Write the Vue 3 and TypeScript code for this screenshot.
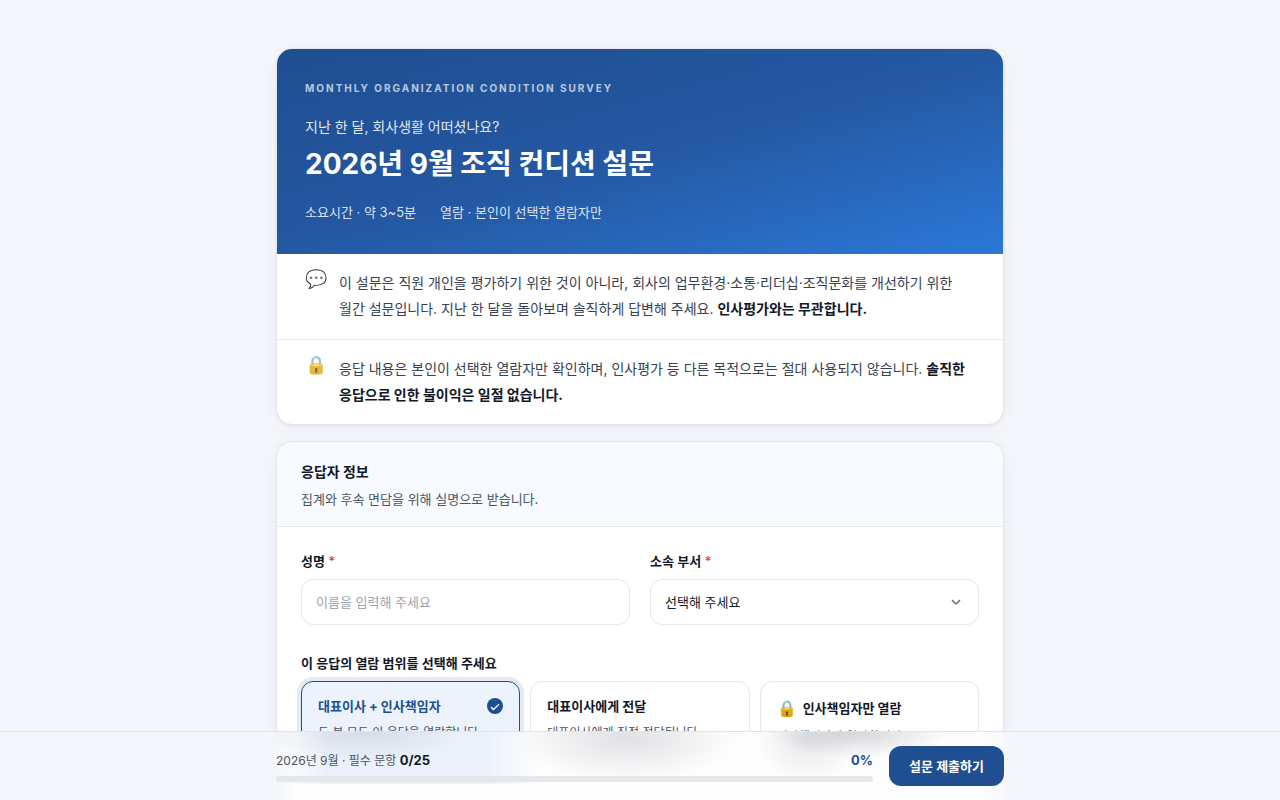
<script setup lang="ts">
import { computed, ref } from 'vue'

interface Scope {
  id: string
  icon?: string
  title: string
  text: string
}

const scopes: Scope[] = [
  { id: 'both', title: '대표이사 + 인사책임자', text: '두 분 모두 이 응답을 열람합니다.' },
  { id: 'ceo', title: '대표이사에게 전달', text: '대표이사에게 직접 전달됩니다.' },
  { id: 'hr', icon: '🔒', title: '인사책임자만 열람', text: '인사책임자만 열람합니다.' },
]

const name = ref('')
const department = ref('')
const scope = ref('both')
const answered = ref(0)
const total = 25
const percent = computed(() => Math.round((answered.value / total) * 100))
</script>

<template>
  <form class="page" @submit.prevent>
    <main class="column">
      <section class="card">
        <header class="hero">
          <p class="eyebrow">MONTHLY ORGANIZATION CONDITION SURVEY</p>
          <p class="lead">지난 한 달, 회사생활 어떠셨나요?</p>
          <h1>2026년 9월 조직 컨디션 설문</h1>
          <div class="meta"><span>소요시간 · 약 3~5분</span><span>열람 · 본인이 선택한 열람자만</span></div>
        </header>
        <div class="notice">
          <span class="notice-icon">💬</span>
          <p>이 설문은 직원 개인을 평가하기 위한 것이 아니라, 회사의 업무환경·소통·리더십·조직문화를 개선하기 위한 월간 설문입니다. 지난 한 달을 돌아보며 솔직하게 답변해 주세요. <strong>인사평가와는 무관합니다.</strong></p>
        </div>
        <div class="notice">
          <span class="notice-icon">🔒</span>
          <p>응답 내용은 본인이 선택한 열람자만 확인하며, 인사평가 등 다른 목적으로는 절대 사용되지 않습니다. <strong>솔직한 응답으로 인한 불이익은 일절 없습니다.</strong></p>
        </div>
      </section>

      <section class="card">
        <header class="section-head">
          <h2>응답자 정보</h2>
          <p>집계와 후속 면담을 위해 실명으로 받습니다.</p>
        </header>
        <div class="section-body">
          <div class="fields">
            <div class="field">
              <label for="name">성명 <span class="required">*</span></label>
              <input id="name" v-model="name" class="control" type="text" placeholder="이름을 입력해 주세요">
            </div>
            <div class="field">
              <label for="department">소속 부서 <span class="required">*</span></label>
              <div class="select-wrap">
                <select id="department" v-model="department" class="control">
                  <option value="">선택해 주세요</option>
                </select>
                <svg class="chevron" viewBox="0 0 12 12" aria-hidden="true"><path d="M2 4.2 6 8l4-3.8" /></svg>
              </div>
            </div>
          </div>
          <fieldset class="scopes">
            <legend>이 응답의 열람 범위를 선택해 주세요</legend>
            <div class="options">
              <label v-for="item in scopes" :key="item.id" class="option" :class="{ selected: scope === item.id }">
                <input v-model="scope" class="option-input" type="radio" name="scope" :value="item.id">
                <span class="option-title">
                  <span v-if="item.icon" class="option-icon">{{ item.icon }}</span>
                  <span>{{ item.title }}</span>
                  <svg v-if="scope === item.id" class="check" viewBox="0 0 16 16" aria-hidden="true"><circle cx="8" cy="8" r="8" /><path d="m3.9 9 2.6 2.5 5.6-5.4" /></svg>
                </span>
                <span class="option-text">{{ item.text }}</span>
              </label>
            </div>
          </fieldset>
        </div>
      </section>
    </main>

    <footer class="bar">
      <div class="bar-inner">
        <div class="progress">
          <div class="progress-labels">
            <span>2026년 9월 · 필수 문항 <strong>{{ answered }}/{{ total }}</strong></span>
            <strong class="percent">{{ percent }}%</strong>
          </div>
          <div class="track"><div class="fill" :style="{ width: percent + '%' }"></div></div>
        </div>
        <button class="submit" type="submit">설문 제출하기</button>
      </div>
    </footer>
  </form>
</template>

<style>
body {
  margin: 0;
  background: #f4f6fb;
}
</style>

<style scoped>
* {
  box-sizing: border-box;
}

.page {
  padding: 48px 24px 80px;
  color: #111827;
  font-family: Inter, "Noto Sans CJK KR", sans-serif;
  font-size: 13px;
  line-height: 20px;
  word-break: keep-all;
}

p,
h1,
h2 {
  margin: 0;
}

.column {
  display: flex;
  flex-direction: column;
  gap: 16px;
  max-width: 728px;
  margin: 0 auto;
}

.card {
  overflow: hidden;
  border: 1px solid #e5e7eb;
  border-radius: 16px;
  background: #fff;
  box-shadow: 0 1px 3px rgba(16, 24, 40, 0.06), 0 4px 16px rgba(16, 24, 40, 0.04);
}

.hero {
  padding: 30px 28px;
  background: linear-gradient(165deg, #1f4e91 0%, #2458a2 50%, #2b78d8 100%);
  color: #fff;
}

.eyebrow {
  margin-bottom: 18px;
  color: rgba(255, 255, 255, 0.7);
  font-size: 10px;
  font-weight: 700;
  letter-spacing: 2px;
  line-height: 18px;
}

.lead {
  color: rgba(255, 255, 255, 0.88);
  font-size: 14px;
  line-height: 24px;
}

h1 {
  margin: 5px 0 17px;
  font-size: 28px;
  font-weight: 700;
  line-height: 40px;
}

.meta {
  display: flex;
  gap: 24px;
  color: rgba(255, 255, 255, 0.85);
  line-height: 23px;
}

.notice {
  display: flex;
  gap: 12px;
  padding: 16px 28px 17px;
  color: #374151;
  font-size: 14px;
  line-height: 26px;
}

.notice + .notice {
  padding-bottom: 16px;
  border-top: 1px solid #e5e7eb;
}

.notice-icon {
  flex: none;
  width: 22px;
  font-size: 18px;
  line-height: 18px;
  text-align: center;
  opacity: 0.8;
}

.notice strong {
  color: #111827;
  font-weight: 700;
}

.section-head {
  padding: 16px 24px 15px;
  border-bottom: 1px solid #e5e7eb;
  background: #f7faff;
}

h2 {
  margin-bottom: 2px;
  font-size: 14px;
  font-weight: 700;
  line-height: 28px;
}

.section-head p {
  color: #4b5563;
  line-height: 23px;
}

.section-body {
  padding: 24px;
}

.fields {
  display: grid;
  grid-template-columns: 1fr 1fr;
  gap: 20px;
}

.field label,
legend {
  display: block;
  padding: 0;
  font-weight: 600;
}

.field label {
  margin-bottom: 8px;
}

.required {
  color: #ef4444;
}

.control {
  display: block;
  width: 100%;
  height: 46px;
  padding: 0 14px;
  border: 1px solid #e5e7eb;
  border-radius: 12px;
  outline: none;
  background: #fff;
  color: #111827;
  font: inherit;
  appearance: none;
}

.control::placeholder {
  color: #9ca3af;
}

.select-wrap {
  position: relative;
}

.chevron {
  position: absolute;
  top: 17px;
  right: 17px;
  width: 12px;
  height: 12px;
  fill: none;
  stroke: #6b7280;
  stroke-width: 1.6;
  pointer-events: none;
}

.scopes {
  min-width: 0;
  margin: 28px 0 0;
  padding: 0;
  border: 0;
}

legend {
  margin-bottom: 8px;
}

.options {
  display: grid;
  grid-template-columns: repeat(3, 1fr);
  gap: 10px;
}

.option {
  position: relative;
  display: flex;
  flex-direction: column;
  gap: 6px;
  padding: 13px 16px;
  border: 1px solid #e5e7eb;
  border-radius: 12px;
  background: #fff;
}

.option.selected {
  border-color: #1f4e91;
  background: #edf3fc;
  box-shadow: 0 0 0 4px #e4ebf5;
}

.option-input {
  position: absolute;
  opacity: 0;
}

.option-title {
  display: flex;
  align-items: center;
  font-weight: 700;
  line-height: 22px;
}

.selected .option-title {
  color: #1f4e91;
}

.option-icon {
  margin-right: 6px;
  font-size: 16px;
  line-height: 26px;
}

.check {
  width: 16px;
  height: 16px;
  margin-left: auto;
  fill: #1f4e91;
}

.check path {
  fill: none;
  stroke: #fff;
  stroke-width: 1.3;
}

.option-text {
  color: #4b5563;
  font-size: 12px;
}

.bar {
  position: fixed;
  z-index: 10;
  right: 0;
  bottom: 0;
  left: 0;
  padding: 0 24px;
  border-top: 1px solid #e1e4ea;
  background: #f4f6fb;
}

.bar-inner {
  display: flex;
  align-items: center;
  gap: 16px;
  max-width: 728px;
  margin: 0 auto;
  padding: 14px 0;
  background:
    radial-gradient(ellipse 100px 30px at 12% 0, rgba(70, 80, 100, 0.13), transparent),
    radial-gradient(ellipse 110px 44px at 48% 8%, rgba(70, 75, 85, 0.16), transparent),
    radial-gradient(ellipse 90px 26px at 80% 0, rgba(70, 75, 85, 0.22), transparent),
    radial-gradient(ellipse 50px 44px at 73% 10%, rgba(70, 75, 85, 0.12), transparent),
    linear-gradient(90deg, transparent 1%, #ebf1fb 7%, #ebf1fb 29%, transparent 36%) 0 0 / 100% 52px no-repeat,
    linear-gradient(90deg, #f4f6fb, #fdfdfe 3%, #fdfdfe 97%, #f8f9fc);
}

.progress {
  flex: 1;
}

.progress-labels {
  display: flex;
  justify-content: space-between;
  height: 20px;
  margin-bottom: 6px;
  color: #4b5563;
  font-size: 12px;
}

.progress-labels strong {
  color: #111827;
  font-size: 13px;
  font-weight: 700;
}

.progress-labels .percent {
  color: #1f4e91;
}

.track {
  height: 6px;
  overflow: hidden;
  border-radius: 3px;
  background: #e5e7eb;
}

.fill {
  height: 100%;
  background: #1f4e91;
}

.submit {
  height: 40px;
  padding: 0 20px;
  border: 0;
  border-radius: 12px;
  background: #1f4e91;
  color: #fff;
  font: inherit;
  font-weight: 600;
}
</style>
